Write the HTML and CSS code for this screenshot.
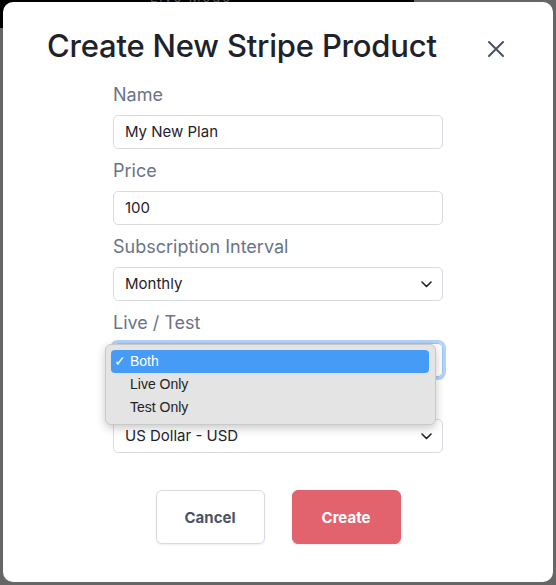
FILE: index.html
```html
<!DOCTYPE html>
<html>
<head>
<meta charset="utf-8">
<link rel="stylesheet" href="styles.css">
</head>
<body>
<div class="backdrop-bar"><span class="backdrop-text">Live Mode</span></div>
<div class="overlay">
  <div class="modal">
    <div class="modal-header">
      <h1 class="title">Create New Stripe Product</h1>
      <button class="close" aria-label="Close">
        <svg width="16" height="16" viewBox="0 0 16 16"><path d="M1 1 L15 15 M15 1 L1 15" stroke="#4a5366" stroke-width="2" stroke-linecap="round" fill="none"/></svg>
      </button>
    </div>
    <div class="form">
      <div class="field">
        <div class="label">Name</div>
        <div class="control">My New Plan</div>
      </div>
      <div class="field">
        <div class="label">Price</div>
        <div class="control">100</div>
      </div>
      <div class="field">
        <div class="label">Subscription Interval</div>
        <div class="control select">Monthly<svg class="chev" width="11" height="7" viewBox="0 0 11 7"><path d="M1 1 L5.5 5.5 L10 1" stroke="#222" stroke-width="1.6" fill="none" stroke-linecap="round" stroke-linejoin="round"/></svg></div>
      </div>
      <div class="field open">
        <div class="label">Live / Test</div>
        <div class="control select focused">Both<svg class="chev" width="11" height="7" viewBox="0 0 11 7"><path d="M1 1 L5.5 5.5 L10 1" stroke="#222" stroke-width="1.6" fill="none" stroke-linecap="round" stroke-linejoin="round"/></svg></div>
        <ul class="menu">
          <li class="item active"><span class="check">✓</span>Both</li>
          <li class="item"><span class="check"></span>Live Only</li>
          <li class="item"><span class="check"></span>Test Only</li>
        </ul>
      </div>
      <div class="field">
        <div class="label">Currency</div>
        <div class="control select">US Dollar - USD<svg class="chev" width="11" height="7" viewBox="0 0 11 7"><path d="M1 1 L5.5 5.5 L10 1" stroke="#222" stroke-width="1.6" fill="none" stroke-linecap="round" stroke-linejoin="round"/></svg></div>
      </div>
    </div>
    <div class="actions">
      <button class="btn">Cancel</button>
      <button class="btn primary">Create</button>
    </div>
  </div>
</div>
</body>
</html>
```
FILE: styles.css
```css
* { box-sizing: border-box; }
html, body { margin: 0; padding: 0; }
body {
  width: 556px;
  height: 585px;
  background: #666666;
  font-family: Inter, "Noto Sans", sans-serif;
  overflow: hidden;
  position: relative;
}
.backdrop-bar {
  position: absolute;
  left: 0;
  top: 0;
  width: 414px;
  height: 28px;
  background: #000;
}
.backdrop-text {
  position: absolute;
  left: 150px;
  top: -11px;
  font-size: 13px;
  color: #555;
  letter-spacing: 2px;
}
.overlay {
  position: relative;
  padding: 2px 3px 3px 3px;
}
.modal {
  background: #fff;
  width: 550px;
  height: 580px;
  border-radius: 10px;
  padding: 24px 49px 0 44px;
}
.modal-header {
  display: flex;
  align-items: center;
  justify-content: space-between;
}
.title {
  margin: 0;
  font-size: 31px;
  line-height: 40px;
  font-weight: 500;
  color: #1e222b;
  letter-spacing: -0.2px;
}
.close {
  border: 0;
  background: none;
  padding: 0;
  width: 16px;
  height: 16px;
  margin-top: 6px;
  display: flex;
}
.form {
  margin-left: 66px;
  width: 330px;
  margin-top: 17px;
}
.field {
  position: relative;
  margin-bottom: 10px;
}
.field.open { z-index: 5; }
.label {
  font-size: 18px;
  line-height: 24px;
  color: #6b7388;
  margin-bottom: 8px;
}
.control {
  height: 34px;
  border: 1px solid #d8dbe1;
  border-radius: 5px;
  padding: 0 11px;
  font-size: 15px;
  line-height: 32px;
  color: #1e222b;
  display: flex;
  align-items: center;
  justify-content: space-between;
}
.chev { margin-right: -1px; }
.focused {
  border-color: #9cc3f5;
  box-shadow: 0 0 0 3px #b4d3fb;
}
.menu {
  position: absolute;
  z-index: 10;
  left: -8px;
  top: 33px;
  width: 331px;
  margin: 0;
  padding: 5px 6px 5px 5px;
  list-style: none;
  background: #e4e4e4;
  border: 1px solid #c9c9c9;
  border-radius: 6px;
  box-shadow: 0 3px 10px rgba(0,0,0,0.22);
  font-family: "Liberation Sans", Arial, sans-serif;
  font-size: 14px;
  color: #222;
}
.item {
  height: 23px;
  line-height: 23px;
  border-radius: 4px;
  display: flex;
  align-items: center;
}
.check {
  display: inline-block;
  width: 19px;
  padding-left: 3px;
}
.item.active {
  background: #469bf7;
  color: #fff;
}
.actions {
  display: flex;
  justify-content: center;
  gap: 27px;
  margin-top: 37px;
  margin-left: -44px;
  margin-right: -49px;
}
.btn {
  width: 109px;
  height: 54px;
  border-radius: 6px;
  border: 1px solid #d7dbe3;
  background: #fff;
  font-family: Inter, sans-serif;
  font-size: 15px;
  font-weight: 700;
  color: #4b5467;
  box-shadow: 0 1px 2px rgba(20,30,60,0.08);
}
.btn.primary {
  background: #e2636e;
  border-color: #e2636e;
  color: #fff;
}
```
